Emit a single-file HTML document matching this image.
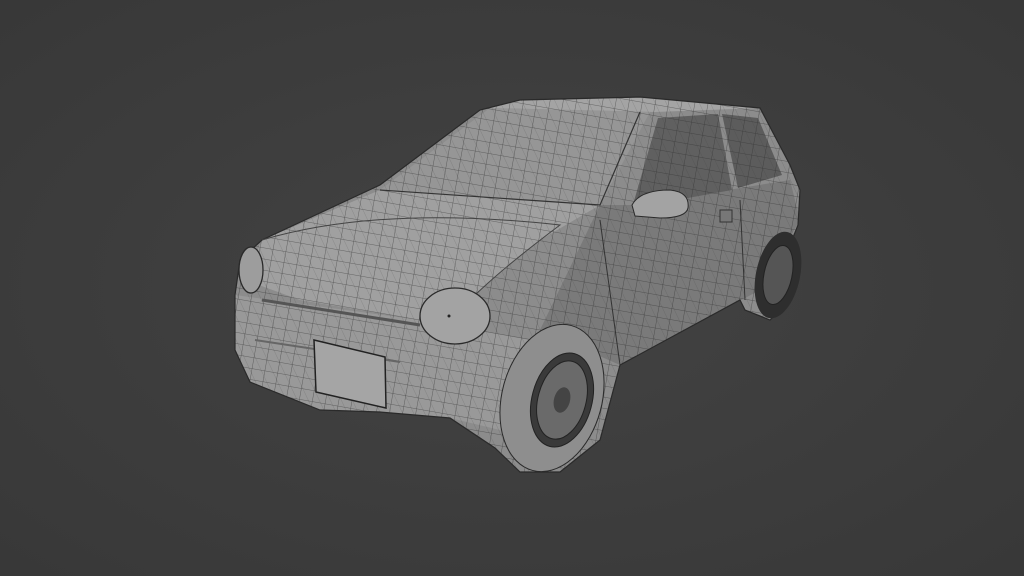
<!DOCTYPE html>
<html><head><style>
html,body{margin:0;padding:0;width:1024px;height:576px;overflow:hidden;background:#3c3c3c}
</style></head><body>
<svg width="1024" height="576" viewBox="0 0 1024 576" xmlns="http://www.w3.org/2000/svg">
<defs>
<radialGradient id="bg" cx="50%" cy="50%" r="70%"><stop offset="0" stop-color="#434343"/><stop offset="1" stop-color="#383838"/></radialGradient>
<pattern id="grid" width="13" height="11" patternUnits="userSpaceOnUse" patternTransform="rotate(10)">
<path d="M0 0H13M0 0V11" stroke="#2e2e2e" stroke-width="0.8" fill="none" opacity="0.7"/></pattern>
<pattern id="grid2" width="10" height="10" patternUnits="userSpaceOnUse" patternTransform="rotate(-25)">
<path d="M0 0V10" stroke="#333" stroke-width="0.7" fill="none" opacity="0.6"/></pattern>
<clipPath id="body"><path id="bp" d="M235 295 L240 260 L262 240 L380 185 L480 110 L520 100 L640 97 L760 108 L790 165 L800 190 L798 225 L790 245 L790 300 L770 320 L745 310 L740 300 L620 365 L600 440 L560 472 L520 472 L495 448 L450 418 L380 412 L320 410 L250 382 L235 350 Z"/></clipPath>
</defs>
<rect width="1024" height="576" fill="url(#bg)"/>
<g clip-path="url(#body)">
<rect width="1024" height="576" fill="#8c8c8c"/>
<path d="M262 240 L380 190 L600 205 L540 240 L480 290 L420 320 L300 300 L245 280 Z" fill="#a0a0a0"/>
<path d="M235 295 L420 320 L530 340 L500 430 L450 418 L320 410 L250 382 L235 350Z" fill="#999"/>
<path d="M490 108 L650 112 L600 205 L380 190 Z" fill="#969696"/>
<path d="M480 110 L520 100 L640 97 L760 108 L655 112 L490 108Z" fill="#a4a4a4"/>
<path d="M600 205 L635 205 L790 180 L800 220 L760 290 L620 365 L540 330 Z" fill="#7a7a7a"/>
<path d="M658 118 L718 114 L732 190 L632 208 Z" fill="#606060"/>
<path d="M722 114 L758 118 L782 175 L738 188 Z" fill="#5c5c5c"/>
<rect width="1024" height="576" fill="url(#grid)"/>
<rect width="1024" height="576" fill="url(#grid2)" opacity="0.5"/>
</g>
<use href="#bp" fill="none" stroke="#2a2a2a" stroke-width="1.2"/>
<path d="M380 190 L600 205 L640 112" fill="none" stroke="#333" stroke-width="1.2"/>
<path d="M262 240 Q380 205 560 225 Q500 270 470 300" fill="none" stroke="#444" stroke-width="1"/>
<path d="M620 365 L600 220 M745 300 L740 200" fill="none" stroke="#333" stroke-width="1"/>
<ellipse cx="778" cy="275" rx="22" ry="44" fill="#2e2e2e" transform="rotate(12 778 275)"/>
<ellipse cx="778" cy="275" rx="14" ry="30" fill="#555" stroke="#222" transform="rotate(12 778 275)"/>
<ellipse cx="552" cy="398" rx="50" ry="75" fill="#8e8e8e" stroke="#2a2a2a" transform="rotate(15 552 398)"/>
<ellipse cx="562" cy="400" rx="30" ry="48" fill="#3a3a3a" stroke="#222" transform="rotate(15 562 400)"/>
<ellipse cx="562" cy="400" rx="24" ry="40" fill="#6a6a6a" stroke="#222" transform="rotate(15 562 400)"/>
<ellipse cx="562" cy="400" rx="8" ry="13" fill="#444" transform="rotate(15 562 400)"/>
<ellipse cx="455" cy="316" rx="35" ry="28" fill="#a3a3a3" stroke="#2a2a2a" stroke-width="1.3"/>
<circle cx="449" cy="316" r="1.5" fill="#222"/>
<ellipse cx="251" cy="270" rx="12" ry="23" fill="#9d9d9d" stroke="#2a2a2a" stroke-width="1.3"/>
<path d="M262 300 L420 325" stroke="#555" stroke-width="3"/>
<path d="M255 340 L400 362" stroke="#666" stroke-width="2"/>
<path d="M314 340 L385 357 L386 408 L316 392 Z" fill="#a5a5a5" stroke="#222" stroke-width="1.5"/>
<path d="M632 205 Q640 190 670 190 Q690 192 688 208 Q686 218 660 218 L635 216 Z" fill="#a3a3a3" stroke="#2a2a2a"/>
<path d="M720 210 h12 v12 h-12z" fill="#777" stroke="#333"/>
</svg>
</body></html>
